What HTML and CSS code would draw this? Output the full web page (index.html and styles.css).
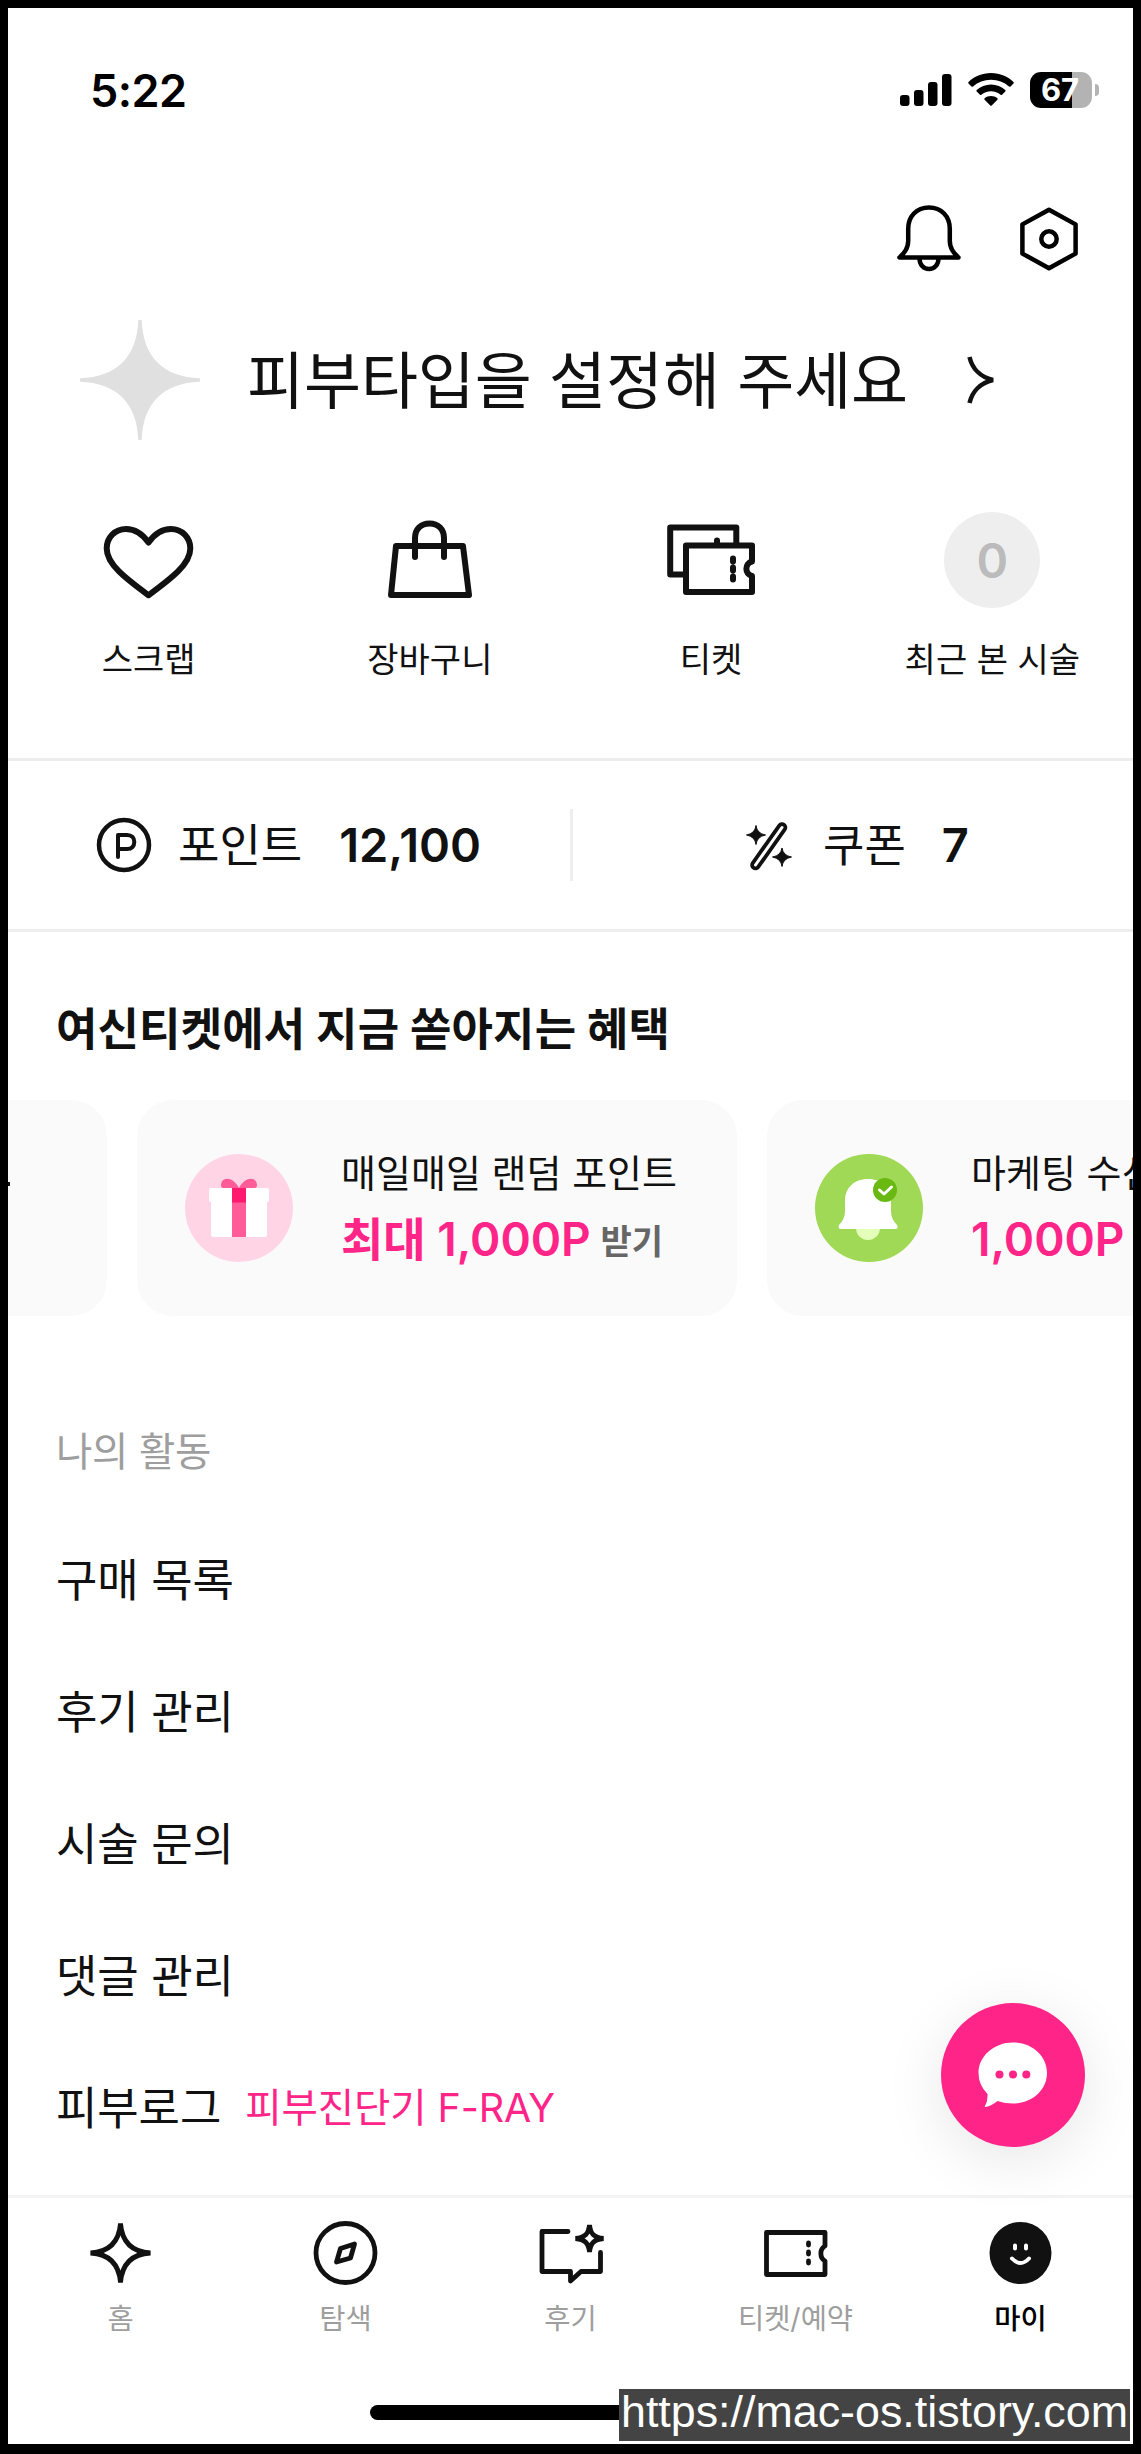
FILE: index.html
```html
<!DOCTYPE html>
<html lang="ko">
<head>
<meta charset="utf-8">
<title>마이</title>
<link rel="stylesheet" href="styles.css">
</head>
<body>
<div class="screen">
  <header class="status">
    <span class="time">5:22</span>
    <div class="status-icons">
      <svg width="52" height="34" viewBox="0 0 52 34"><rect x="0" y="22" width="9.500" height="11" rx="3"/><rect x="14" y="17" width="9.500" height="16" rx="3"/><rect x="28" y="9" width="9.500" height="24" rx="3"/><rect x="42" y="1" width="9.500" height="32" rx="3"/></svg>
      <svg class="wifi" width="46" height="34" viewBox="0 0 46 34"><path d="M23 0C32 0 40 3.500 45.500 9Q46.200 9.800 45.500 10.500L42.500 13.500Q41.700 14.200 41 13.500C36 9 30 6.700 23 6.700S10 9 5 13.500Q4.300 14.200 3.500 13.500L.5 10.500Q-.2 9.800.5 9C6 3.500 14 0 23 0Z"/><path d="M23 11.500C28.500 11.500 33.500 13.600 37.300 17Q38 17.700 37.300 18.500L34 21.700Q33.300 22.300 32.600 21.700C30 19.500 26.700 18.200 23 18.200S16 19.500 13.400 21.700Q12.700 22.300 12 21.700L8.700 18.500Q8 17.700 8.700 17C12.500 13.600 17.500 11.500 23 11.500Z"/><path d="M23 23C25.500 23 27.700 23.900 29.400 25.300Q30.100 26 29.400 26.700L23.700 32.500Q23 33.100 22.300 32.500L16.600 26.700Q15.900 26 16.600 25.300C18.300 23.900 20.500 23 23 23Z"/></svg>
      <div class="battery"><span>67</span></div>
      <div class="battery-cap"></div>
    </div>
  </header>

  <div class="actions">
    <svg width="64" height="68" viewBox="0 0 64 68" class="line-icon"><path d="M32 2.500C19.500 2.500 11.200 11.500 11.200 24V36Q11.200 45 2.500 52.500H61.500Q52.800 45 52.800 36V24C52.800 11.500 44.500 2.500 32 2.500Z"/><path d="M22.500 53.500C22.500 59.500 26.500 64 32 64S41.500 59.500 41.500 53.500"/></svg>
    <svg width="58" height="64" viewBox="0 0 58 64" class="line-icon"><path d="M29 2.800 55.600 17.400V46.600L29 61.200 2.400 46.600V17.400Z"/><circle cx="29" cy="32" r="7.700"/></svg>
  </div>

  <div class="skin-type">
    <svg width="120" height="120" viewBox="0 0 120 120"><path fill="#e0e0e0" d="M58.300 0H61.700C63 37 83 57 120 58.300V61.700C83 63 63 83 61.700 120H58.300C57 83 37 63 0 61.700V58.300C37 57 57 37 58.300 0Z"/></svg>
    <h1>피부타입을 설정해 주세요</h1>
    <svg class="chevron" width="30" height="52" viewBox="0 0 30 52"><path d="M2.500 3C5 14 13 23 26 26C13 29 5 38 2.500 49" fill="none" stroke="#111" stroke-width="4.500"/></svg>
  </div>

  <nav class="shortcuts">
    <a><span class="pic"><svg width="96" height="96" viewBox="0 0 96 96" class="ink"><path d="M47.500 83.300C24 66 5.700 52 5.700 36.500C5.700 25.500 14 17 25 17C34.500 17 41.500 22 47.500 30.500C53.500 22 60.500 17 70 17C81 17 89.300 25.500 89.300 36.500C89.300 52 71 66 47.500 83.300Z"/></svg></span>스크랩</a>
    <a><span class="pic"><svg width="96" height="96" viewBox="0 0 96 96" class="ink"><path d="M14 34H81L87 83H9ZM33 45V26C33 17 39 11.500 47.500 11.500S62 17 62 26V45"/></svg></span>장바구니</a>
    <a><span class="pic"><svg width="96" height="96" viewBox="0 0 96 96" class="ink"><path d="M20 62.500H7.200V15.500H73.300V32M54 28.500V32M23 33.500H89V49.500C81.500 51.500 81.500 62 89 64V80H23Z"/><path d="M70 46.500V49.500M70 55.500V58.500M70 64.500V67.500"/></svg></span>티켓</a>
    <a><span class="pic count">0</span>최근 본 시술</a>
  </nav>

  <section class="wallet">
    <div class="wallet-item points">
      <svg width="54" height="54" viewBox="0 0 54 54" class="line-icon"><circle cx="27" cy="27" r="25"/><path d="M21 39V17H30C35 17 37.300 20 37.300 24S35 31 30 31H21" stroke-linecap="round" stroke-width="4"/></svg>
      <span>포인트</span><b>12,100</b>
    </div>
    <div class="wallet-item coupons">
      <svg width="46" height="50" viewBox="0 0 46 50"><path d="M36 7.500 9.500 45" fill="none" stroke="#111" stroke-width="10.500" stroke-linecap="round"/><path d="M36 7.500 9.500 45" fill="none" stroke="#fff" stroke-width="3" stroke-linecap="round"/><path d="M10 5.500Q11 13.500 19.500 15Q11 16.500 10 24.500Q9 16.500 .5 15Q9 13.500 10 5.500ZM36 28Q37 35.500 45.500 37Q37 38.500 36 46.500Q35 38.500 26.500 37Q35 35.500 36 28Z" fill="#111" stroke="#111"/></svg>
      <span>쿠폰</span><b>7</b>
    </div>
  </section>

  <h2>여신티켓에서 지금 쏟아지는 혜택</h2>
  <section class="benefits">
    <article class="card previous"><i></i></article>
    <article class="card">
      <svg width="108" height="108" viewBox="0 0 108 108"><circle cx="54" cy="54" r="54" fill="#ffd4e5"/><path d="M54 34C49 24 39 22 36.500 28.500Q35 34 38 34ZM54 34C59 24 69 22 71.500 28.500Q73 34 70 34Z" fill="#ff5c99"/><path d="M26 34H82Q84 34 84 36V46Q84 48 82 48V81Q82 83 80 83H28Q26 83 26 81V48Q24 48 24 46V36Q24 34 26 34Z" fill="#fff"/><path d="M47 48H61V83H47Z" fill="#ff5c99"/><path d="M47 34H61V48.500H47Z" fill="#ff196f"/></svg>
      <div class="card-text"><p>매일매일 랜덤 포인트</p><p class="reward">최대 1,000P <small>받기</small></p></div>
    </article>
    <article class="card">
      <svg width="108" height="108" viewBox="0 0 108 108"><circle cx="54" cy="54" r="54" fill="#9fd955"/><circle cx="53" cy="74" r="12" fill="#e3ffba"/><path d="M53 25C39 25 30 34 30 47V57Q30 65 24 71Q22.500 75 26 75H80Q84 75 82 71Q76 65 76 57V47C76 34 67 25 53 25Z" fill="#fff"/><circle cx="70" cy="36" r="12" fill="#6ab912"/><path d="M64.500 36 69 40 76.500 33" fill="none" stroke="#fff" stroke-width="3" stroke-linecap="round" stroke-linejoin="round"/></svg>
      <div class="card-text"><p>마케팅 수신</p><p class="reward">1,000P</p></div>
    </article>
  </section>

  <section class="activity">
    <h3>나의 활동</h3>
    <a>구매 목록</a>
    <a>후기 관리</a>
    <a>시술 문의</a>
    <a>댓글 관리</a>
    <a>피부로그<em>피부진단기 F-RAY</em></a>
  </section>

  <footer>
    <nav class="tabs">
      <a><svg width="66" height="66" viewBox="0 0 66 66" class="ink"><path stroke-linejoin="bevel" d="M32.500 3.500C34 22 44 32 62.500 33C44 34 34 44 32.500 62.500C31 44 21 34 2.500 33C21 32 31 22 32.500 3.500Z"/></svg>홈</a>
      <a><svg width="66" height="66" viewBox="0 0 66 66" class="ink"><circle cx="32.500" cy="33" r="29.500"/><path d="M41.500 24 37.500 38 23.500 42 27.500 28.500Z"/></svg>탐색</a>
      <a><svg width="66" height="66" viewBox="0 0 66 66" class="ink"><path d="M30 11.500H4V51.500H32.500V61L43 51.500H62.500V32.500"/><path stroke-linejoin="bevel" d="M51.500 5C52.500 14 56 17.500 65.500 18.500C56 19.500 52.500 23 51.500 32C50.500 23 47 19.500 37.500 18.500C47 17.500 50.500 14 51.500 5Z"/></svg>후기</a>
      <a><svg width="66" height="66" viewBox="0 0 66 66" class="ink"><path d="M3.500 12.500H62V26C56.500 29 56.500 38 62 41V54.500H3.500Z"/><path d="M45.500 23V25M45.500 32V34M45.500 41V43"/></svg>티켓/예약</a>
      <a class="active"><svg width="66" height="66" viewBox="0 0 66 66"><circle cx="32.500" cy="33" r="31" fill="#111"/><path d="M27 25.500V28.500M38 25.500V28.500M24 38.500Q32.500 47.500 41 38.500" fill="none" stroke="#fff" stroke-width="4" stroke-linecap="round"/></svg>마이</a>
    </nav>
    <div class="home-indicator"></div>
  </footer>

  <button class="chat" aria-label="chat"><svg width="70" height="66" viewBox="0 0 70 66"><path fill="#fff" d="M35 .5C54 .5 69 14 69 31S54 61.500 35 61.500Q27 61.500 19.500 59Q13 64.500 6.500 65Q10 59 9.500 52Q.5 43 .5 31C.5 14 16 .5 35 .5Z"/><g fill="#ff2488"><circle cx="21.500" cy="32.500" r="4"/><circle cx="35" cy="32.500" r="4"/><circle cx="48.300" cy="32.500" r="4"/></g></svg></button>
  <div class="watermark">https://mac-os.tistory.com</div>
</div>
</body>
</html>
```
FILE: styles.css
```css
* { box-sizing: border-box; }
body { margin: 0; background: #000; }
h1, h2, h3, p { margin: 0; font-weight: 400; }
svg { display: block; flex: none; overflow: visible; }

.screen {
  position: relative;
  display: flex;
  flex-direction: column;
  width: 1141px;
  height: 2454px;
  border: 8px solid #000;
  border-bottom-width: 10px;
  background: #fff;
  color: #111;
  overflow: hidden;
  font-family: Inter, "Noto Sans CJK KR", sans-serif;
  white-space: nowrap;
}
.line-icon { fill: none; stroke: #111; stroke-width: 4.500; stroke-linejoin: round; }
.ink { fill: none; stroke: #111; stroke-width: 6; stroke-linecap: round; stroke-linejoin: round; }

.status {
  display: flex;
  justify-content: space-between;
  align-items: center;
  height: 164px;
  padding: 0 34px 0 82px;
}
.time { color: #000; font-size: 45px; font-weight: 600; letter-spacing: -.6px; }
.status-icons { display: flex; align-items: center; }
.wifi { margin: 0 16px; }
.battery {
  width: 62px;
  height: 36px;
  border-radius: 11px;
  background: linear-gradient(90deg, #000 67%, #b3b3b3 67%);
  color: #fff;
  font-size: 31px;
  font-weight: 700;
  line-height: 36px;
  text-align: center;
}
.battery span { margin-right: 2px; }
.battery-cap { width: 4px; height: 12px; margin-left: 3px; border-radius: 0 4px 4px 0; background: #b3b3b3; }

.actions {
  display: flex;
  justify-content: flex-end;
  align-items: center;
  gap: 59px;
  height: 120px;
  padding: 14px 55px 0 0;
}
.actions svg { stroke: #000; }

.skin-type {
  display: flex;
  align-items: center;
  height: 176px;
  padding-left: 72px;
}
.skin-type h1 { width: 716px; padding: 4px 0 0 47px; font-size: 62px; letter-spacing: -.1px; line-height: 80px; }
.chevron { margin-left: 51px; }

.shortcuts { display: grid; grid-template-columns: repeat(4, 1fr); height: 290px; padding-top: 44px; }
.shortcuts a { display: flex; flex-direction: column; align-items: center; gap: 29px; font-size: 34px; line-height: 46px; }
.pic { width: 96px; height: 96px; }
.count { border-radius: 50%; background: #eee; color: #bbb; font-size: 48px; font-weight: 600; line-height: 97px; text-align: center; }

.wallet {
  display: flex;
  height: 174px;
  border: solid #eee;
  border-width: 3px 0;
}
.wallet-item { display: flex; align-items: center; font-size: 45px; line-height: 60px; }
.wallet-item span { padding-top: 2px; }
.wallet-item b { font-size: 47px; font-weight: 600; }
.points { width: 565px; padding-left: 89px; background: linear-gradient(#eee, #eee) right center / 3px 72px no-repeat; }
.points span { margin: 0 37px 0 27px; }
.coupons { padding-left: 173px; }
.coupons span { margin: 0 36px 0 31px; }

h2 { padding: 64px 0 0 48px; font-size: 45px; font-weight: 700; letter-spacing: .15px; line-height: 68px; }
.benefits { display: flex; gap: 30px; margin: 36px 0 0 -501px; }
.card {
  display: flex;
  align-items: center;
  gap: 48px;
  flex: none;
  width: 600px;
  height: 216px;
  padding-left: 48px;
  border-radius: 36px;
  background: #fafafa;
}
/* tail of the scrolled-out label */
.previous i { width: 2px; height: 4px; margin: -48px 0 0 453px; background: #111; }
.card-text { padding-top: 10px; }
.card p { font-size: 38px; line-height: 52px; }
.card .reward { color: #ff2488; font-size: 46px; font-weight: 600; line-height: 80px; }
.reward small { position: relative; top: -2px; margin-left: -2px; color: #666; font-size: 34px; font-weight: 600; line-height: 1; }

.activity { display: flex; flex-direction: column; flex: 1; padding: 104px 0 0 48px; }
.activity h3 { height: 94px; color: #9e9e9e; font-size: 39.500px; letter-spacing: -.3px; line-height: 64px; }
.activity a { height: 132px; font-size: 45px; letter-spacing: -.1px; line-height: 133px; }
.activity em { position: relative; top: -3px; margin-left: 24px; color: #ff2488; font-size: 39.500px; font-style: normal; }

footer { height: 249px; border-top: 3px solid #f3f3f3; background: #fff; }
.tabs { display: grid; grid-template-columns: repeat(5, 1fr); height: 207px; padding-top: 22px; }
.tabs a { display: flex; flex-direction: column; align-items: center; gap: 13px; color: #9e9e9e; font-size: 28.500px; line-height: 40px; }
.tabs .ink { stroke-width: 4.800; }
.tabs .active { color: #000; font-weight: 500; }
.home-indicator { width: 402px; height: 15px; margin: 0 auto; border-radius: 8px; background: #000; }

.chat {
  position: absolute;
  right: 48px;
  bottom: 297px;
  display: grid;
  place-items: center;
  width: 144px;
  height: 144px;
  padding: 0;
  border: 0;
  border-radius: 50%;
  background: #ff2488;
  box-shadow: 0 12px 60px rgba(0, 0, 0, .1);
}
.watermark {
  position: absolute;
  right: 3px;
  bottom: 3px;
  width: 511px;
  height: 52px;
  background: #444;
  color: #fff;
  font: 44.800px/45px "Liberation Sans", sans-serif;
  text-align: center;
}
```
